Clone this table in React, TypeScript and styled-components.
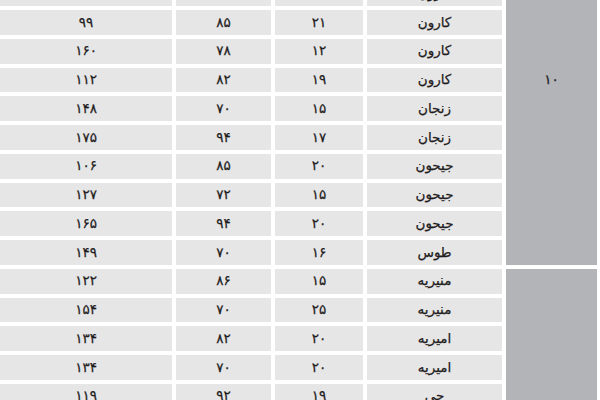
import { Fragment } from "react";
import styled, { createGlobalStyle } from "styled-components";

const GlobalStyle = createGlobalStyle`
  html, body {
    margin: 0;
    padding: 0;
    background: #ffffff;
  }
`;

const Viewport = styled.div`
  width: 600px;
  height: 400px;
  overflow: hidden;
  background: #ffffff;
`;

const Table = styled.div`
  direction: rtl;
  display: grid;
  grid-template-columns: 91px 135px 88px 95px 172px;
  grid-auto-rows: 24.75px;
  column-gap: 4px;
  row-gap: 4px;
  padding-right: 3px;
  margin-top: -105px;
  font-family: "DejaVu Sans", "Noto Sans", sans-serif;
  font-size: 13.5px;
  color: #1f1c1d;
`;

const Cell = styled.div`
  display: flex;
  align-items: center;
  justify-content: center;
  background: #e6e6e6;
  line-height: 1;
  -webkit-text-stroke: 0.25px #1f1c1d;
`;

const GroupCell = styled(Cell)<{ $span: number }>`
  grid-row: span ${(p) => p.$span};
  background: #b3b4b8;
`;

type Row = [string, string, string, string];

interface Group {
  label: string;
  rows: Row[];
}

// [name, col3, col2, col1]
const groups: Group[] = [
  {
    label: "۱۰",
    rows: [
      ["کارون", "۱۸", "۷۴", "۱۲۰"],
      ["کارون", "۲۲", "۸۰", "۱۳۲"],
      ["کارون", "۱۶", "۹۰", "۱۴۵"],
      ["کارون", "۱۴", "۷۶", "۱۱۸"],
      ["کارون", "۲۱", "۸۵", "۹۹"],
      ["کارون", "۱۲", "۷۸", "۱۶۰"],
      ["کارون", "۱۹", "۸۲", "۱۱۲"],
      ["زنجان", "۱۵", "۷۰", "۱۴۸"],
      ["زنجان", "۱۷", "۹۴", "۱۷۵"],
      ["جیحون", "۲۰", "۸۵", "۱۰۶"],
      ["جیحون", "۱۵", "۷۲", "۱۲۷"],
      ["جیحون", "۲۰", "۹۴", "۱۶۵"],
      ["طوس", "۱۶", "۷۰", "۱۴۹"],
    ],
  },
  {
    label: "۱۱",
    rows: [
      ["منیریه", "۱۵", "۸۶", "۱۲۲"],
      ["منیریه", "۲۵", "۷۰", "۱۵۴"],
      ["امیریه", "۲۰", "۸۲", "۱۳۴"],
      ["امیریه", "۲۰", "۷۰", "۱۳۴"],
      ["جی", "۱۹", "۹۲", "۱۱۹"],
      ["جی", "۱۸", "۸۸", "۱۴۱"],
      ["جی", "۲۲", "۷۵", "۱۲۸"],
      ["ری", "۱۷", "۸۰", "۱۳۰"],
      ["ری", "۲۱", "۷۸", "۱۵۲"],
      ["ری", "۱۵", "۹۰", "۱۴۴"],
      ["تهران", "۱۹", "۸۴", "۱۳۶"],
      ["تهران", "۲۰", "۷۲", "۱۲۵"],
      ["تهران", "۱۶", "۸۸", "۱۵۸"],
    ],
  },
];

export default function App() {
  return (
    <>
      <GlobalStyle />
      <Viewport>
        <Table>
          {groups.map((g, gi) =>
            g.rows.map((r, ri) => (
              <Fragment key={`${gi}-${ri}`}>
                {ri === 0 && <GroupCell $span={g.rows.length}>{g.label}</GroupCell>}
                {r.map((v, ci) => (
                  <Cell key={ci}>{v}</Cell>
                ))}
              </Fragment>
            ))
          )}
        </Table>
      </Viewport>
    </>
  );
}
